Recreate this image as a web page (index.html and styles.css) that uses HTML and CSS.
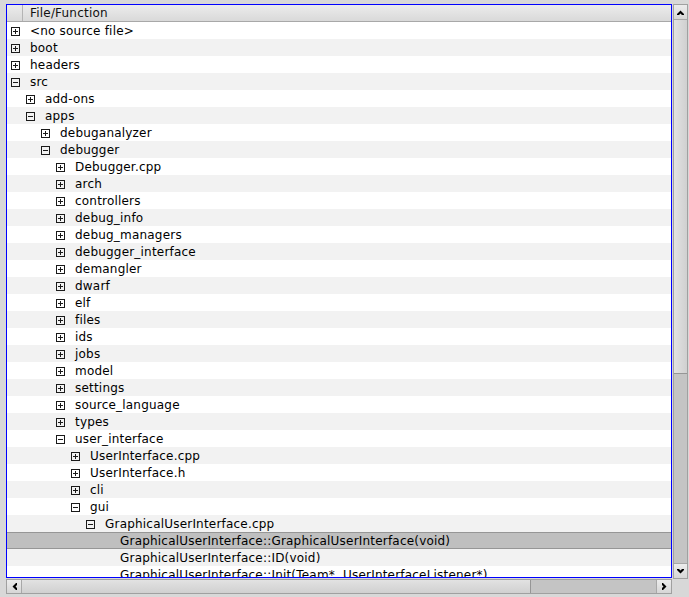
FILE: index.html
```html
<!DOCTYPE html>
<html lang="en">
  <head>
    <meta charset="UTF-8" />
    <title>Source Files</title>
    <link rel="stylesheet" href="styles.css">
  </head>
  <body>
    <div class="window">
      <div class="view">
        <div class="header">
          <div class="header-pad"></div>
          <div class="header-title">File/Function</div>
        </div>
        <div class="rows">
          <div class="row l0"><span class="box plus"></span>&lt;no source file&gt;</div>
          <div class="row l0"><span class="box plus"></span>boot</div>
          <div class="row l0"><span class="box plus"></span>headers</div>
          <div class="row l0"><span class="box minus"></span>src</div>
          <div class="row l1"><span class="box plus"></span>add-ons</div>
          <div class="row l1"><span class="box minus"></span>apps</div>
          <div class="row l2"><span class="box plus"></span>debuganalyzer</div>
          <div class="row l2"><span class="box minus"></span>debugger</div>
          <div class="row l3"><span class="box plus"></span>Debugger.cpp</div>
          <div class="row l3"><span class="box plus"></span>arch</div>
          <div class="row l3"><span class="box plus"></span>controllers</div>
          <div class="row l3"><span class="box plus"></span>debug_info</div>
          <div class="row l3"><span class="box plus"></span>debug_managers</div>
          <div class="row l3"><span class="box plus"></span>debugger_interface</div>
          <div class="row l3"><span class="box plus"></span>demangler</div>
          <div class="row l3"><span class="box plus"></span>dwarf</div>
          <div class="row l3"><span class="box plus"></span>elf</div>
          <div class="row l3"><span class="box plus"></span>files</div>
          <div class="row l3"><span class="box plus"></span>ids</div>
          <div class="row l3"><span class="box plus"></span>jobs</div>
          <div class="row l3"><span class="box plus"></span>model</div>
          <div class="row l3"><span class="box plus"></span>settings</div>
          <div class="row l3"><span class="box plus"></span>source_language</div>
          <div class="row l3"><span class="box plus"></span>types</div>
          <div class="row l3"><span class="box minus"></span>user_interface</div>
          <div class="row l4"><span class="box plus"></span>UserInterface.cpp</div>
          <div class="row l4"><span class="box plus"></span>UserInterface.h</div>
          <div class="row l4"><span class="box plus"></span>cli</div>
          <div class="row l4"><span class="box minus"></span>gui</div>
          <div class="row l5"><span class="box minus"></span>GraphicalUserInterface.cpp</div>
          <div class="row l6 selected"><span class="box none"></span>GraphicalUserInterface::GraphicalUserInterface(void)</div>
          <div class="row l6"><span class="box none"></span>GraphicalUserInterface::ID(void)</div>
          <div class="row l6"><span class="box none"></span>GraphicalUserInterface::Init(Team*, UserInterfaceListener*)</div>
        </div>
      </div>

      <div class="vscroll">
        <div class="arrow">
          <svg width="7" height="5" viewBox="0 0 7 5"><path d="M0 4 L3.5 0.5 L7 4 L7 5 L5 5 L3.5 3.5 L2 5 L0 5 Z" fill="#000"/></svg>
        </div>
        <div class="thumb v-thumb"></div>
        <div class="track"></div>
        <div class="arrow">
          <svg width="7" height="5" viewBox="0 0 7 5"><path d="M0 1 L3.5 4.5 L7 1 L7 0 L5 0 L3.5 1.5 L2 0 L0 0 Z" fill="#000"/></svg>
        </div>
      </div>

      <div class="hscroll">
        <div class="arrow">
          <svg width="5" height="7" viewBox="0 0 5 7"><path d="M4 0 L0.5 3.5 L4 7 L5 7 L5 5 L3.5 3.5 L5 2 L5 0 Z" fill="#000"/></svg>
        </div>
        <div class="thumb h-thumb"></div>
        <div class="track"></div>
        <div class="arrow">
          <svg width="5" height="7" viewBox="0 0 5 7"><path d="M1 0 L4.5 3.5 L1 7 L0 7 L0 5 L1.5 3.5 L0 2 L0 0 Z" fill="#000"/></svg>
        </div>
      </div>

      <div class="corner"></div>
    </div>
  </body>
</html>
```

FILE: styles.css
```css
body {
  margin: 0;
  padding: 0;
  background-color: #d8d8d8;
  font-family: "DejaVu Sans", sans-serif;
  font-size: 12px;
  letter-spacing: 0.2px;
  color: #000;
  overflow: hidden;
}

.window {
  display: grid;
  grid-template-columns: 666px 15px;
  grid-template-rows: 574px 15px;
  column-gap: 1px;
  row-gap: 1px;
  padding: 4px 0 0 6px;
}

/* list view */
.view {
  border: 1px solid #0000ff;
  background-color: #fff;
  overflow: hidden;
  display: flex;
  flex-direction: column;
}

.header {
  display: flex;
  height: 16px;
  flex: 0 0 16px;
  border-bottom: 1px solid #a8a8a8;
  background: linear-gradient(#ececec, #d9d9d9);
}
.header-pad {
  width: 15px;
  border-right: 1px solid #b4b4b4;
}
.header-title {
  padding-left: 7px;
  line-height: 17px;
  color: #111;
}

.rows {
  flex: 1;
}

.row {
  box-sizing: border-box;
  height: 17px;
  padding-top: 1px;
  line-height: 16px;
  display: flex;
  align-items: center;
  white-space: nowrap;
}
.row:nth-child(even) {
  background-color: #f2f2f2;
}
.row.selected {
  background-color: #bfbfbf;
  border-top: 1px solid #969696;
  border-bottom: 1px solid #969696;
  padding-top: 0;
}

.l0 { padding-left: 4px; }
.l1 { padding-left: 19px; }
.l2 { padding-left: 34px; }
.l3 { padding-left: 49px; }
.l4 { padding-left: 64px; }
.l5 { padding-left: 79px; }
.l6 { padding-left: 94px; }

.box {
  position: relative;
  box-sizing: border-box;
  width: 9px;
  height: 9px;
  margin-right: 10px;
  flex: 0 0 9px;
  border: 1px solid #1a1a1a;
}
.box.none {
  border-color: transparent;
}
.box.plus::before,
.box.minus::before {
  content: "";
  position: absolute;
  left: 1px;
  top: 3px;
  width: 5px;
  height: 1px;
  background-color: #1a1a1a;
}
.box.plus::after {
  content: "";
  position: absolute;
  left: 3px;
  top: 1px;
  width: 1px;
  height: 5px;
  background-color: #1a1a1a;
}

/* scroll bars */
.vscroll,
.hscroll {
  display: flex;
  background-color: #c4c4c4;
}
.vscroll {
  flex-direction: column;
  border: 1px solid #a0a0a0;
  box-sizing: border-box;
  height: 575px;
}
.hscroll {
  border: 1px solid #a0a0a0;
  box-sizing: border-box;
}

.arrow {
  flex: 0 0 14px;
  height: 14px;
  display: flex;
  align-items: center;
  justify-content: center;
  background: linear-gradient(#ececec, #d6d6d6);
  box-sizing: border-box;
}
.vscroll .arrow {
  width: 13px;
  flex-basis: 15px;
  height: 15px;
}
.vscroll .arrow:first-child {
  border-bottom: 1px solid #a8a8a8;
}
.vscroll .arrow:last-child {
  border-top: 1px solid #a8a8a8;
}
.hscroll .arrow {
  height: 13px;
  width: 15px;
  flex-basis: 15px;
}
.hscroll .arrow:first-child {
  border-right: 1px solid #a8a8a8;
}
.hscroll .arrow:last-child {
  border-left: 1px solid #a8a8a8;
}

.thumb {
  box-sizing: border-box;
  background-color: #dadada;
}
.v-thumb {
  flex: 0 0 354px;
  border-bottom: 1px solid #969696;
  background: linear-gradient(to right, #e2e2e2, #d0d0d0);
}
.h-thumb {
  flex: 0 0 509px;
  border-right: 1px solid #969696;
  background: linear-gradient(#e2e2e2, #d0d0d0);
}
.track {
  flex: 1;
  background-color: #c4c4c4;
}

.corner {
  background-color: #d8d8d8;
}
```
